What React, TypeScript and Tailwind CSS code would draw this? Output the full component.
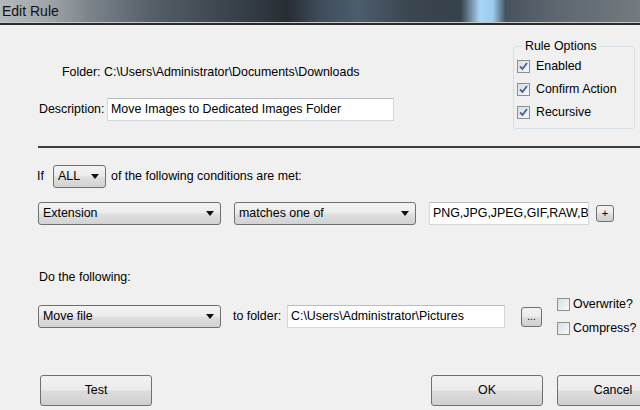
import React from "react";

const font = "font-['Liberation_Sans',Arial,sans-serif]";

function Arrow() {
  return (
    <svg width="8" height="5" viewBox="0 0 8 5">
      <path d="M0 0h8L4 5z" fill="#111" />
    </svg>
  );
}

function Combo({ label, className }: { label: string; className: string }) {
  return (
    <div
      className={`flex h-[23px] items-center justify-between rounded-[3px] border border-[#707070] bg-[linear-gradient(#f3f3f3,#ececec_45%,#dedede_55%,#d2d2d2)] pl-[4px] pr-[6px] text-[12.4px] text-black ${className}`}
    >
      <span>{label}</span>
      <Arrow />
    </div>
  );
}

function TextBox({ value, className }: { value: string; className: string }) {
  return (
    <div
      className={`flex h-[23px] items-center overflow-hidden whitespace-nowrap border border-[#d3d7dc] border-t-[#b9bdc3] bg-white pl-[3px] text-[12.4px] text-black ${className}`}
    >
      {value}
    </div>
  );
}

function Btn({ label, className }: { label: string; className: string }) {
  return (
    <div
      className={`flex shrink-0 items-center justify-center rounded-[3px] border border-[#707070] bg-[linear-gradient(#f2f2f2,#ebebeb_48%,#dddddd_52%,#cfcfcf)] text-black ${className}`}
    >
      {label}
    </div>
  );
}

function Check({ checked, label, gap }: { checked: boolean; label: string; gap: string }) {
  return (
    <div className={`flex items-center ${gap}`}>
      <div className="flex h-[13px] w-[13px] items-center justify-center border border-[#8e8f8f] bg-[linear-gradient(135deg,#d8dde4,#f7f9fb)]">
        {checked && (
          <svg width="9" height="9" viewBox="0 0 9 9">
            <path d="M1 4.5L3.5 7L8 1" stroke="#4a5f97" strokeWidth="1.8" fill="none" />
          </svg>
        )}
      </div>
      <span className="text-[12.4px] text-black">{label}</span>
    </div>
  );
}

export default function App() {
  return (
    <div className={`flex h-[410px] w-[640px] flex-col overflow-hidden bg-[#f0f0f0] ${font}`}>
      {/* title bar */}
      <div className="flex h-[25px] shrink-0 items-center border-b-2 border-b-[#2b2b2b] bg-[linear-gradient(90deg,#b4b8bb_0%,#a2a7ab_7%,#7c848b_14%,#545e67_24%,#3a434c_36%,#272d33_45%,#3f4d5a_50%,#4d5d6b_56%,#3a4550_64%,#36414c_72%,#a8d6f5_75%,#9ccdf0_77%,#46525e_79%,#5c656d_86%,#737a80_100%)] pl-[2px] shadow-[inset_0_-1px_0_#c9c9c9]">
        <span className="text-[14px] text-[#111]">Edit Rule</span>
      </div>

      {/* top section */}
      <div className="flex h-[121px] shrink-0 items-start">
        <div className="flex flex-col pl-[39px] pt-[39px]">
          <div className="ml-[23px] h-[16px] text-[12.4px] leading-[16px] text-black">
            Folder: C:\Users\Administrator\Documents\Downloads
          </div>
          <div className="mt-[18px] flex items-center">
            <span className="w-[68px] text-[12.4px] text-black">Description:</span>
            <TextBox value="Move Images to Dedicated Images Folder" className="w-[287px]" />
          </div>
        </div>
        <fieldset className="ml-auto mr-[5px] mt-[13px] w-[122px] rounded-[3px] border border-[#d5dfe5] pb-[4px] pl-[3px]">
          <legend className="ml-[6px] px-[2px] text-[12.4px] leading-[16px] text-black">Rule Options</legend>
          <div className="flex flex-col pt-[1px]">
            <div className="flex h-[23px] items-center">
              <Check checked label="Enabled" gap="gap-[6px]" />
            </div>
            <div className="flex h-[23px] items-center">
              <Check checked label="Confirm Action" gap="gap-[6px]" />
            </div>
            <div className="flex h-[23px] items-center">
              <Check checked label="Recursive" gap="gap-[6px]" />
            </div>
          </div>
        </fieldset>
      </div>

      {/* separator */}
      <div className="ml-[38px] h-[2px] shrink-0 bg-[#3d3d3d]" />

      {/* if row */}
      <div className="mt-[17px] flex h-[23px] shrink-0 items-center pl-[37px] text-[12.4px] text-black">
        <span className="w-[16px]">If</span>
        <Combo label="ALL" className="w-[53px]" />
        <span className="ml-[5px]">of the following conditions are met:</span>
      </div>

      {/* condition row */}
      <div className="mt-[14px] flex h-[23px] shrink-0 items-center pl-[38px]">
        <Combo label="Extension" className="w-[183px]" />
        <Combo label="matches one of" className="ml-[13px] w-[182px]" />
        <TextBox value="PNG,JPG,JPEG,GIF,RAW,B" className="ml-[13px] w-[160px]" />
        <Btn label="+" className="ml-[7px] h-[17px] w-[18px] text-[11px]" />
      </div>

      {/* do the following */}
      <div className="mt-[44px] h-[16px] shrink-0 pl-[39px] text-[12.4px] leading-[16px] text-black">
        Do the following:
      </div>

      {/* action row */}
      <div className="mt-[20px] flex h-[23px] shrink-0 items-center pl-[38px]">
        <Combo label="Move file" className="w-[183px]" />
        <span className="ml-[12px] w-[54px] text-[12.4px] text-black">to folder:</span>
        <TextBox value="C:\Users\Administrator\Pictures" className="w-[218px]" />
        <Btn label="..." className="ml-[16px] h-[20px] w-[21px] text-[10px]" />
        <div className="ml-[15px] flex flex-col gap-[5px]">
          <Check checked={false} label="Overwrite?" gap="gap-[3px]" />
          <Check checked={false} label="Compress?" gap="gap-[3px]" />
        </div>
      </div>

      {/* buttons */}
      <div className="mt-[47px] flex shrink-0 items-center pl-[40px] text-[12.4px]">
        <Btn label="Test" className="h-[31px] w-[112px]" />
        <Btn label="OK" className="ml-[279px] h-[31px] w-[112px]" />
        <Btn label="Cancel" className="ml-[14px] h-[31px] w-[112px]" />
      </div>
    </div>
  );
}
